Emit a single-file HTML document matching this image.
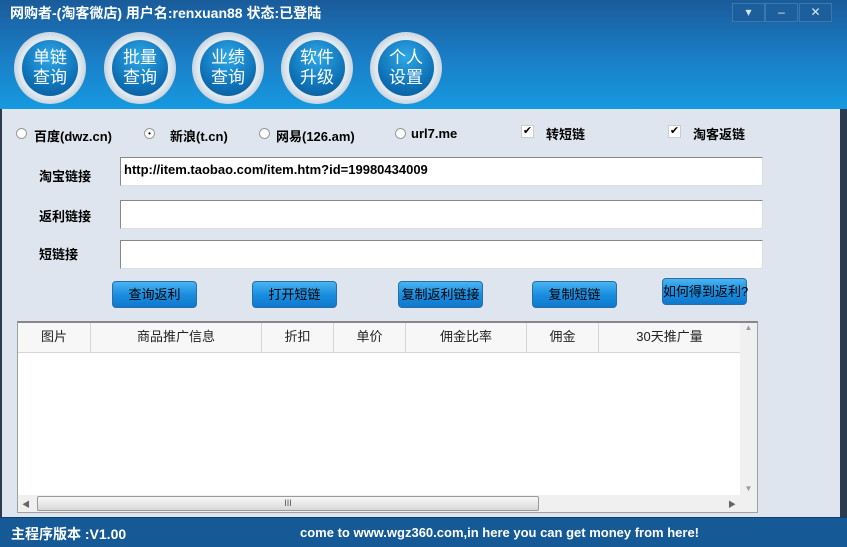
<!DOCTYPE html><html><head><meta charset="utf-8"><style>
*{margin:0;padding:0;box-sizing:border-box}
body{width:847px;height:547px;position:relative;overflow:hidden;background:#dfe5ef;font-family:"Liberation Sans","Noto Sans CJK SC",sans-serif}
.a{position:absolute}
#hdr{left:0;top:0;width:847px;height:109px;background:linear-gradient(#1a5b9a,#1a7cc4 50%,#1699e0)}
.title{left:10px;top:3px;color:#fff;font-weight:bold;font-size:14px;white-space:nowrap}
.wb{top:3px;height:19px;width:33px;border:1px solid #3a78b0;background:#1d5f9d;color:#dfe8f2;font-size:12px;text-align:center;line-height:17px}
.rb{width:72px;height:72px;border-radius:50%;background:radial-gradient(circle,#ffffff 0,#dfe7ee 60%,#8aa3b8 100%);top:32px}
.rb div{position:absolute;left:8px;top:8px;width:56px;height:56px;border-radius:50%;background:radial-gradient(circle at 50% 30%,#2fa8e8,#0f73b8 60%,#0a5590);color:#fff;font-size:17px;line-height:20px;text-align:center;padding-top:8px}
.lab{font-weight:bold;font-size:13px;color:#000;white-space:nowrap}
.rad{width:11px;height:11px;border-radius:50%;background:#fff;border:1px solid #999}
.chk{width:13px;height:13px;font-size:11px;line-height:11px;text-align:center;background:#fff;border:1px solid #ccc}
.inp{left:120px;width:643px;height:29px;background:#fff;border:1px solid #888;border-right-color:#ddd;border-bottom-color:#ddd;font-weight:bold;font-size:13px;padding:4px 3px;white-space:nowrap}
.btn{height:27px;width:85px;border-radius:4px;background:linear-gradient(#49b4f0,#1a8ee0 50%,#0f78cc);border:1px solid #2a6ea8;color:#000;font-size:13px;text-align:center;line-height:25px;white-space:nowrap}
#tbl{left:17px;top:321px;width:741px;height:192px;background:#fff;border:1px solid #a0a0a0;border-top:2px solid #888}
.th{top:0;height:30px;border-right:1px solid #d5d5d5;border-bottom:1px solid #d5d5d5;background:#f7f7f7;font-size:13px;text-align:center;line-height:28px;color:#222}
#ftr{left:0;top:517px;width:847px;height:30px;background:#155a96;border-top:1px solid #0d3f6e}
</style></head><body>
<div id="hdr" class="a">
<div class="a title">网购者-(淘客微店) 用户名:renxuan88 状态:已登陆</div>
<div class="a wb" style="left:732px">▾</div><div class="a wb" style="left:765px">–</div><div class="a wb" style="left:799px">✕</div>
<div class="a rb" style="left:14px"><div>单链<br>查询</div></div>
<div class="a rb" style="left:104px"><div>批量<br>查询</div></div>
<div class="a rb" style="left:192px"><div>业绩<br>查询</div></div>
<div class="a rb" style="left:281px"><div>软件<br>升级</div></div>
<div class="a rb" style="left:370px"><div>个人<br>设置</div></div>
</div>
<div class="a" style="left:840px;top:109px;width:7px;height:408px;background:#2b3a4e"></div>
<div class="a" style="left:0;top:109px;width:2px;height:408px;background:#2b3a4e"></div>
<div class="a rad" style="left:16px;top:128px"></div><div class="a lab" style="left:34px;top:126px">百度(dwz.cn)</div>
<div class="a rad" style="left:144px;top:128px;font-size:8px;line-height:9px;text-align:center">•</div><div class="a lab" style="left:170px;top:126px">新浪(t.cn)</div>
<div class="a rad" style="left:259px;top:128px"></div><div class="a lab" style="left:276px;top:126px">网易(126.am)</div>
<div class="a rad" style="left:395px;top:128px"></div><div class="a lab" style="left:411px;top:126px">url7.me</div>
<div class="a chk" style="left:521px;top:125px">✔</div><div class="a lab" style="left:546px;top:124px">转短链</div>
<div class="a chk" style="left:668px;top:125px">✔</div><div class="a lab" style="left:693px;top:124px">淘客返链</div>
<div class="a lab" style="left:39px;top:166px">淘宝链接</div>
<div class="a lab" style="left:39px;top:206px">返利链接</div>
<div class="a lab" style="left:39px;top:244px">短链接</div>
<div class="a inp" style="top:157px">http://item.taobao.com/item.htm?id=19980434009</div>
<div class="a inp" style="top:200px"></div>
<div class="a inp" style="top:240px"></div>
<div class="a btn" style="left:112px;top:281px">查询返利</div>
<div class="a btn" style="left:252px;top:281px">打开短链</div>
<div class="a btn" style="left:398px;top:281px">复制返利链接</div>
<div class="a btn" style="left:532px;top:281px">复制短链</div>
<div class="a btn" style="left:662px;top:278px">如何得到返利?</div>
<div id="tbl" class="a">
<div class="a th" style="left:0;width:73px">图片</div>
<div class="a th" style="left:73px;width:171px">商品推广信息</div>
<div class="a th" style="left:244px;width:72px">折扣</div>
<div class="a th" style="left:316px;width:72px">单价</div>
<div class="a th" style="left:388px;width:121px">佣金比率</div>
<div class="a th" style="left:509px;width:72px">佣金</div>
<div class="a th" style="left:581px;width:141px;border-right:none">30天推广量</div>
<div class="a" style="left:722px;top:0;width:17px;height:172px;background:#f0f0f0;font-size:8px;color:#999;text-align:center">▲<div style="position:absolute;bottom:2px;width:17px">▼</div></div>
<div class="a" style="left:0;top:172px;width:739px;height:17px;background:#f0f0f0"></div>
<div class="a" style="left:4px;top:176px;font-size:8px;color:#666">◀</div>
<div class="a" style="left:19px;top:173px;width:502px;height:15px;border:1px solid #999;border-radius:2px;background:linear-gradient(#f8f8f8,#d8d8d8);font-size:9px;text-align:center;line-height:13px;color:#555">III</div>
<div class="a" style="left:710px;top:176px;font-size:8px;color:#666">▶</div>
</div>
<div id="ftr" class="a">
<div class="a" style="left:11px;top:6px;color:#fff;font-weight:bold;font-size:14px">主程序版本 :V1.00</div>
<div class="a" style="left:300px;top:7px;color:#fff;font-weight:bold;font-size:13px;white-space:nowrap">come to www.wgz360.com,in here you can get money from here!</div>
</div>
</body></html>
